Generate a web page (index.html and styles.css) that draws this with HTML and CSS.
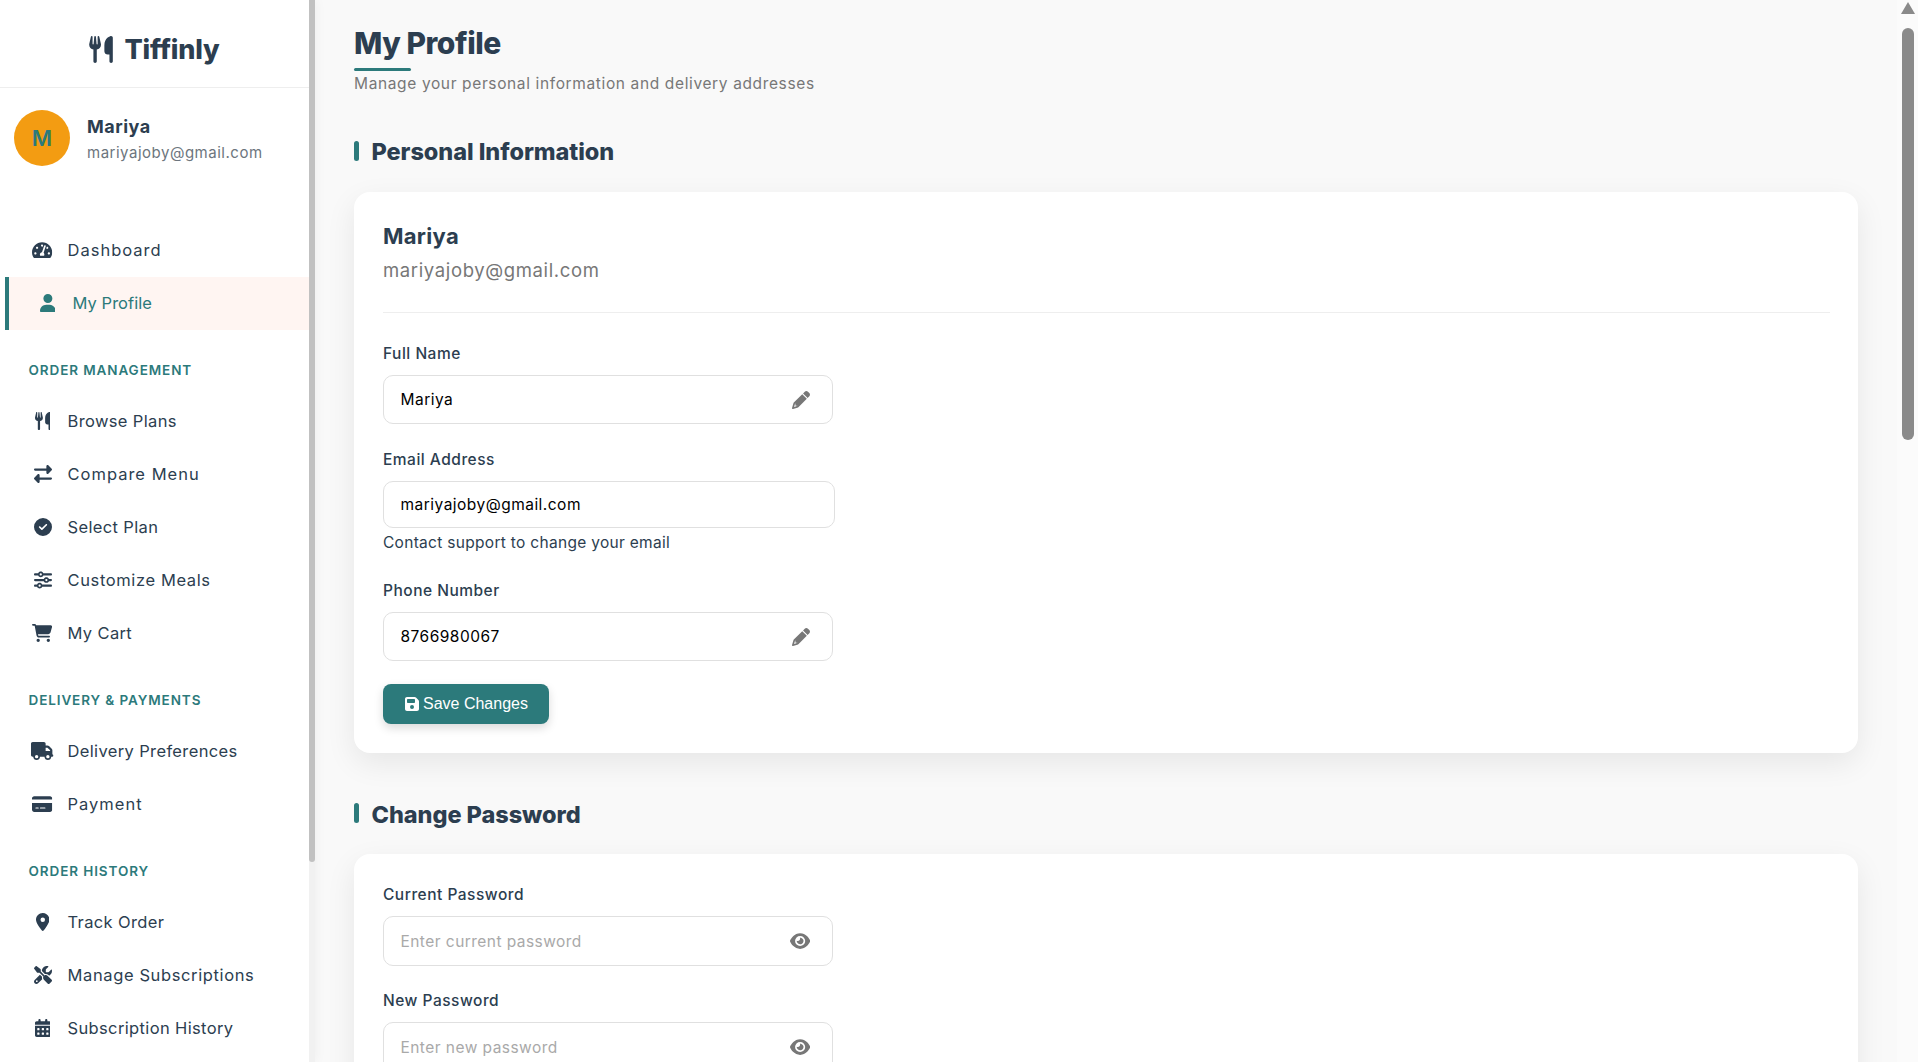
FILE: index.html
```html
<!doctype html>
<html lang="en">
<head>
<meta charset="utf-8">
<title>My Profile - Tiffinly</title>
<link rel="stylesheet" href="styles.css">
</head>
<body>
<svg class="sprite" xmlns="http://www.w3.org/2000/svg">
  <symbol id="i-utensils" viewBox="0 0 448 512"><path d="M416 0C400 0 288 32 288 176V288c0 35.3 28.7 64 64 64h32V480c0 17.7 14.3 32 32 32s32-14.3 32-32V352 240 32c0-17.7-14.3-32-32-32zM64 16C64 7.8 57.9 1 49.7 .1S34.2 4.6 32.4 12.5L2.1 148.8C.7 155.1 0 161.5 0 167.9c0 45.9 35.1 83.6 80 87.7V480c0 17.7 14.3 32 32 32s32-14.3 32-32V255.6c44.9-4.1 80-41.8 80-87.7c0-6.4-.7-12.8-2.1-19.1L191.6 12.5c-1.8-8-9.3-13.3-17.4-12.4S160 7.8 160 16V150.2c0 5.4-4.4 9.8-9.8 9.8c-5.1 0-9.3-3.9-9.8-9L127.9 14.6C127.2 6.3 120.3 0 112 0s-15.2 6.3-15.9 14.6L83.7 151c-.5 5.1-4.7 9-9.8 9c-5.4 0-9.8-4.4-9.8-9.8V16zm48.3 152l-.3 0-.3 0 .3-.7 .3 .7z"/></symbol>
  <symbol id="i-gauge" viewBox="0 0 576 512"><path d="M288 32C128.94 32 0 160.94 0 320c0 52.8 14.25 102.26 39.06 144.8 5.61 9.62 16.3 15.2 27.44 15.2h443c11.14 0 21.83-5.58 27.44-15.2C561.75 422.26 576 372.8 576 320c0-159.06-128.94-288-288-288zm0 64c14.71 0 26.58 10.13 30.32 23.65-1.11 2.26-2.64 4.23-3.45 6.67l-9.22 27.67c-5.13 3.49-10.97 6.01-17.64 6.01-17.67 0-32-14.33-32-32S270.33 96 288 96zM96 384c-17.67 0-32-14.33-32-32s14.33-32 32-32 32 14.33 32 32-14.33 32-32 32zm48-160c-17.67 0-32-14.33-32-32s14.33-32 32-32 32 14.33 32 32-14.33 32-32 32zm246.77-72.41l-61.33 184C343.13 347.33 352 364.54 352 384c0 11.72-3.38 22.55-8.88 32H232.88c-5.5-9.45-8.88-20.28-8.88-32 0-33.94 26.5-61.43 59.9-63.59l61.34-184.01c4.17-12.56 17.73-19.45 30.36-15.17 12.57 4.19 19.35 17.79 15.17 30.36zm14.66 57.2l15.52-46.55c3.47-1.29 7.13-2.23 11.05-2.23 17.67 0 32 14.33 32 32s-14.33 32-32 32c-11.38-.01-20.89-6.28-26.57-15.22zM480 384c-17.67 0-32-14.33-32-32s14.33-32 32-32 32 14.33 32 32-14.33 32-32 32z"/></symbol>
  <symbol id="i-user" viewBox="0 0 448 512"><path d="M224 256A128 128 0 1 0 224 0a128 128 0 1 0 0 256zm-45.7 48C79.8 304 0 383.8 0 482.3C0 498.7 13.3 512 29.7 512H418.3c16.4 0 29.7-13.3 29.7-29.7C448 383.8 368.2 304 269.7 304H178.3z"/></symbol>
  <symbol id="i-exchange" viewBox="0 0 512 512"><path d="M32 96l320 0V32c0-12.9 7.8-24.6 19.8-29.6s25.7-2.2 34.9 6.9l96 96c6 6 9.4 14.1 9.4 22.6s-3.4 16.6-9.4 22.6l-96 96c-9.2 9.2-22.9 11.9-34.9 6.9s-19.8-16.6-19.8-29.6V160L32 160c-17.7 0-32-14.3-32-32s14.3-32 32-32zM480 352c17.7 0 32 14.3 32 32s-14.3 32-32 32H160v64c0 12.9-7.8 24.6-19.8 29.6s-25.7 2.2-34.9-6.9l-96-96c-6-6-9.4-14.1-9.4-22.6s3.4-16.6 9.4-22.6l96-96c9.2-9.2 22.9-11.9 34.9-6.9s19.8 16.6 19.8 29.6l0 64H480z"/></symbol>
  <symbol id="i-check" viewBox="0 0 512 512"><path d="M256 512A256 256 0 1 0 256 0a256 256 0 1 0 0 512zM369 209L241 337c-9.4 9.4-24.6 9.4-33.9 0l-64-64c-9.4-9.4-9.4-24.6 0-33.9s24.6-9.4 33.9 0l47 47L335 175c9.4-9.4 24.6-9.4 33.9 0s9.4 24.6 0 33.9z"/></symbol>
  <symbol id="i-sliders" viewBox="0 0 512 512"><path d="M0 416c0 17.7 14.3 32 32 32l54.7 0c12.3 28.3 40.5 48 73.3 48s61-19.7 73.3-48L480 448c17.7 0 32-14.3 32-32s-14.3-32-32-32l-246.7 0c-12.3-28.3-40.5-48-73.3-48s-61 19.7-73.3 48L32 384c-17.7 0-32 14.3-32 32zm128 0a32 32 0 1 1 64 0 32 32 0 1 1 -64 0zM320 256a32 32 0 1 1 64 0 32 32 0 1 1 -64 0zm32-80c-32.8 0-61 19.7-73.3 48L32 224c-17.7 0-32 14.3-32 32s14.3 32 32 32l246.7 0c12.3 28.3 40.5 48 73.3 48s61-19.7 73.3-48l54.7 0c17.7 0 32-14.3 32-32s-14.3-32-32-32l-54.7 0c-12.3-28.3-40.5-48-73.3-48zM192 128a32 32 0 1 1 0-64 32 32 0 1 1 0 64zm73.3-64C253 35.7 224.8 16 192 16s-61 19.7-73.3 48L32 64C14.3 64 0 78.3 0 96s14.3 32 32 32l86.7 0c12.3 28.3 40.5 48 73.3 48s61-19.7 73.3-48L480 128c17.7 0 32-14.3 32-32s-14.3-32-32-32L265.3 64z"/></symbol>
  <symbol id="i-cart" viewBox="0 0 576 512"><path d="M0 24C0 10.7 10.7 0 24 0H69.5c22 0 41.5 12.8 50.6 32h411c26.3 0 45.5 25 38.6 50.4l-41 152.3c-8.5 31.4-37 53.3-69.5 53.3H170.7l5.4 28.5c2.2 11.3 12.1 19.5 23.6 19.5H488c13.3 0 24 10.7 24 24s-10.7 24-24 24H199.7c-34.6 0-64.3-24.6-70.7-58.5L77.4 54.5c-.7-3.8-4-6.5-7.9-6.5H24C10.7 48 0 37.3 0 24zM128 464a48 48 0 1 1 96 0 48 48 0 1 1 -96 0zm336-48a48 48 0 1 1 0 96 48 48 0 1 1 0-96z"/></symbol>
  <symbol id="i-truck" viewBox="0 0 640 512"><path d="M48 0C21.5 0 0 21.5 0 48V368c0 26.5 21.5 48 48 48H64c0 53 43 96 96 96s96-43 96-96H384c0 53 43 96 96 96s96-43 96-96h32c17.7 0 32-14.3 32-32s-14.3-32-32-32V288 256 237.3c0-17-6.7-33.3-18.7-45.3L512 114.7c-12-12-28.3-18.7-45.3-18.7H416V48c0-26.5-21.5-48-48-48H48zM416 160h50.7L544 237.3V256H416V160zM112 416a48 48 0 1 1 96 0 48 48 0 1 1 -96 0zm368-48a48 48 0 1 1 0 96 48 48 0 1 1 0-96z"/></symbol>
  <symbol id="i-card" viewBox="0 0 576 512"><path d="M64 32C28.7 32 0 60.7 0 96v32H576V96c0-35.3-28.7-64-64-64H64zM576 224H0V416c0 35.3 28.7 64 64 64H512c35.3 0 64-28.7 64-64V224zM112 352h64c8.8 0 16 7.2 16 16s-7.2 16-16 16H112c-8.8 0-16-7.2-16-16s7.2-16 16-16zm112 16c0-8.8 7.2-16 16-16H368c8.8 0 16 7.2 16 16s-7.2 16-16 16H240c-8.8 0-16-7.2-16-16z"/></symbol>
  <symbol id="i-pin" viewBox="0 0 384 512"><path d="M215.7 499.2C267 435 384 279.4 384 192C384 86 298 0 192 0S0 86 0 192c0 87.4 117 243 168.3 307.2c12.3 15.3 35.1 15.3 47.4 0zM192 128a64 64 0 1 1 0 128 64 64 0 1 1 0-128z"/></symbol>
  <symbol id="i-tools" viewBox="0 0 512 512"><path d="M78.6 5C69.1-2.4 55.6-1.5 47 7L7 47c-8.5 8.5-9.4 22-2.1 31.6l80 104c4.5 5.9 11.6 9.4 19 9.4h54.1l109 109c-14.7 29-10 65.4 14.3 89.6l112 112c12.5 12.5 32.8 12.5 45.3 0l64-64c12.5-12.5 12.5-32.8 0-45.3l-112-112c-24.2-24.2-60.6-29-89.6-14.3l-109-109V104c0-7.5-3.5-14.5-9.4-19L78.6 5zM19.9 396.1C7.2 408.8 0 426.1 0 444.1C0 481.6 30.4 512 67.9 512c18 0 35.3-7.2 48-19.9L233.7 374.3c-7.8-20.9-9-43.6-3.6-65.1l-61.7-61.7L19.9 396.1zM512 144c0-10.5-1.1-20.7-3.2-30.5c-2.4-11.2-16.1-14.1-24.2-6l-63.9 63.9c-3 3-7.1 4.7-11.3 4.7H352c-8.8 0-16-7.2-16-16V102.6c0-4.2 1.7-8.3 4.7-11.3l63.9-63.9c8.1-8.1 5.2-21.8-6-24.2C388.7 1.1 378.5 0 368 0C288.5 0 224 64.5 224 144l0 .8 85.3 85.3c36-9.1 75.8 .5 104 28.7L429 274.5c49-23 83-72.8 83-130.5zM56 432a24 24 0 1 1 48 0 24 24 0 1 1 -48 0z"/></symbol>
  <symbol id="i-calendar" viewBox="0 0 448 512"><path d="M128 0c17.7 0 32 14.3 32 32V64H288V32c0-17.7 14.3-32 32-32s32 14.3 32 32V64h48c26.5 0 48 21.5 48 48v48H0V112C0 85.5 21.5 64 48 64H96V32c0-17.7 14.3-32 32-32zM0 192H448V464c0 26.5-21.5 48-48 48H48c-26.5 0-48-21.5-48-48V192zm64 80v32c0 8.8 7.2 16 16 16h32c8.8 0 16-7.2 16-16V272c0-8.8-7.2-16-16-16H80c-8.8 0-16 7.2-16 16zm128 0v32c0 8.8 7.2 16 16 16h32c8.8 0 16-7.2 16-16V272c0-8.8-7.2-16-16-16H208c-8.8 0-16 7.2-16 16zm144-16c-8.8 0-16 7.2-16 16v32c0 8.8 7.2 16 16 16h32c8.8 0 16-7.2 16-16V272c0-8.8-7.2-16-16-16H336zM64 400v32c0 8.8 7.2 16 16 16h32c8.8 0 16-7.2 16-16V400c0-8.8-7.2-16-16-16H80c-8.8 0-16 7.2-16 16zm144-16c-8.8 0-16 7.2-16 16v32c0 8.8 7.2 16 16 16h32c8.8 0 16-7.2 16-16V400c0-8.8-7.2-16-16-16H208zm112 16v32c0 8.8 7.2 16 16 16h32c8.8 0 16-7.2 16-16V400c0-8.8-7.2-16-16-16H336c-8.8 0-16 7.2-16 16z"/></symbol>
  <symbol id="i-pencil" viewBox="0 0 512 512"><path d="M421.7 220.3L188.5 453.4L154.6 419.5L158.1 416H112C103.2 416 96 408.8 96 400V353.9L92.51 357.4C87.78 362.2 84.31 368 82.42 374.4L59.44 452.6L137.6 429.6C143.1 427.7 149.8 424.2 154.6 419.5L188.5 453.4C178.1 463.8 165.2 471.5 151.1 475.6L30.77 511C22.35 513.5 13.24 511.2 7.03 504.1C.8198 498.8-1.502 489.7 .976 481.2L36.37 360.9C40.53 346.8 48.16 333.9 58.57 323.5L291.7 90.34L421.7 220.3zM492.7 58.75C517.7 83.74 517.7 124.3 492.7 149.3L444.3 197.7L314.3 67.72L362.7 19.32C387.7-5.678 428.3-5.678 453.3 19.32L492.7 58.75z"/></symbol>
  <symbol id="i-save" viewBox="0 0 448 512"><path d="M64 32C28.7 32 0 60.7 0 96V416c0 35.3 28.7 64 64 64H384c35.3 0 64-28.7 64-64V173.3c0-17-6.7-33.3-18.7-45.3L352 50.7C340 38.7 323.7 32 306.7 32H64zm0 96c0-17.7 14.3-32 32-32H288c17.7 0 32 14.3 32 32v64c0 17.7-14.3 32-32 32H96c-17.7 0-32-14.3-32-32V128zM224 288a64 64 0 1 1 0 128 64 64 0 1 1 0-128z"/></symbol>
  <symbol id="i-eye" viewBox="0 0 576 512"><path d="M288 32c-80.8 0-145.5 36.8-192.6 80.6C48.6 156 17.3 208 2.5 243.7c-3.3 7.9-3.3 16.7 0 24.6C17.3 304 48.6 356 95.4 399.4C142.5 443.2 207.2 480 288 480s145.5-36.8 192.6-80.6c46.8-43.5 78.1-95.4 92.9-131.1c3.3-7.9 3.3-16.7 0-24.6c-14.8-35.7-46.1-87.7-92.9-131.1C433.5 68.8 368.8 32 288 32zM144 256a144 144 0 1 1 288 0 144 144 0 1 1 -288 0zm144-64c0 35.3-28.7 64-64 64c-7.1 0-13.9-1.2-20.3-3.3c-5.5-1.8-11.9 1.6-11.7 7.4c.3 6.9 1.3 13.8 3.2 20.7c13.7 51.2 66.4 81.6 117.6 67.9s81.6-66.4 67.9-117.6c-11.1-41.5-47.8-69.4-88.6-71.1c-5.8-.2-9.2 6.1-7.4 11.7c2.1 6.4 3.3 13.2 3.3 20.3z"/></symbol>
</svg>

<div class="app">
  <aside class="sidebar">
    <div class="side-inner">
      <div class="logo">
        <svg class="logo-icon"><use href="#i-utensils"/></svg>
        <span class="logo-text">Tiffinly</span>
      </div>
      <div class="user">
        <div class="avatar">M</div>
        <div class="user-info">
          <div class="user-name">Mariya</div>
          <div class="user-email">mariyajoby@gmail.com</div>
        </div>
      </div>
      <nav class="nav">
        <a class="nav-item top ls-lg"><span class="nav-icon"><svg class="w576"><use href="#i-gauge"/></svg></span>Dashboard</a>
        <a class="nav-item top active ls-xs"><span class="nav-icon"><svg class="w448"><use href="#i-user"/></svg></span>My Profile</a>
        <div class="nav-title">ORDER MANAGEMENT</div>
        <a class="nav-item"><span class="nav-icon"><svg class="w448"><use href="#i-utensils"/></svg></span>Browse Plans</a>
        <a class="nav-item ls-lg"><span class="nav-icon"><svg class="w512"><use href="#i-exchange"/></svg></span>Compare Menu</a>
        <a class="nav-item"><span class="nav-icon"><svg class="w512"><use href="#i-check"/></svg></span>Select Plan</a>
        <a class="nav-item ls-md"><span class="nav-icon"><svg class="w512"><use href="#i-sliders"/></svg></span>Customize Meals</a>
        <a class="nav-item"><span class="nav-icon"><svg class="w576"><use href="#i-cart"/></svg></span>My Cart</a>
        <div class="nav-title">DELIVERY &amp; PAYMENTS</div>
        <a class="nav-item"><span class="nav-icon"><svg class="w640"><use href="#i-truck"/></svg></span>Delivery Preferences</a>
        <a class="nav-item ls-lg"><span class="nav-icon"><svg class="w576"><use href="#i-card"/></svg></span>Payment</a>
        <div class="nav-title nav-title-last">ORDER HISTORY</div>
        <a class="nav-item"><span class="nav-icon"><svg class="w384"><use href="#i-pin"/></svg></span>Track Order</a>
        <a class="nav-item ls-md"><span class="nav-icon"><svg class="w512"><use href="#i-tools"/></svg></span>Manage Subscriptions</a>
        <a class="nav-item"><span class="nav-icon"><svg class="w448"><use href="#i-calendar"/></svg></span>Subscription History</a>
      </nav>
    </div>
    <div class="side-scroll"><div class="side-thumb"></div></div>
  </aside>

  <main class="main">
    <header class="page-head">
      <h1 class="page-title">My Profile</h1>
      <p class="page-sub">Manage your personal information and delivery addresses</p>
    </header>

    <section class="section">
      <h2 class="section-title">Personal Information</h2>
      <div class="card">
        <div class="card-head">
          <div class="card-name">Mariya</div>
          <div class="card-email">mariyajoby@gmail.com</div>
        </div>
        <div class="group">
          <label class="label">Full Name</label>
          <div class="field">
            <input class="input" value="Mariya">
            <svg class="field-icon pencil"><use href="#i-pencil"/></svg>
          </div>
        </div>
        <div class="group group-email">
          <label class="label">Email Address</label>
          <div class="field field-wide">
            <input class="input input-short" value="mariyajoby@gmail.com">
          </div>
          <div class="note">Contact support to change your email</div>
        </div>
        <div class="group">
          <label class="label">Phone Number</label>
          <div class="field">
            <input class="input" value="8766980067">
            <svg class="field-icon pencil"><use href="#i-pencil"/></svg>
          </div>
        </div>
        <button class="btn"><svg class="btn-icon"><use href="#i-save"/></svg>Save Changes</button>
      </div>
    </section>

    <section class="section">
      <h2 class="section-title section-title-low">Change Password</h2>
      <div class="card card-pass">
        <div class="group group-pass">
          <label class="label">Current Password</label>
          <div class="field">
            <input class="input input-tall" placeholder="Enter current password">
            <svg class="field-icon eye"><use href="#i-eye"/></svg>
          </div>
        </div>
        <div class="group group-pass">
          <label class="label">New Password</label>
          <div class="field">
            <input class="input input-tall" placeholder="Enter new password">
            <svg class="field-icon eye"><use href="#i-eye"/></svg>
          </div>
        </div>
      </div>
    </section>

    <div class="page-scroll"><div class="page-arrow"></div><div class="page-thumb"></div></div>
  </main>
</div>
</body>
</html>
```

FILE: styles.css
```css
* { box-sizing: border-box; }
html, body { margin: 0; height: 100%; overflow: hidden; }
body { font-family: Inter, "Liberation Sans", sans-serif; color: #2c3e50; background: #f9f9f9; }
.sprite { display: none; }
svg { fill: currentColor; display: block; }

.app { display: flex; height: 100vh; overflow: hidden; }

/* Sidebar */
.sidebar { position: relative; z-index: 2; flex: 0 0 315px; width: 315px; background: #fff; box-shadow: 2px 0 10px rgba(0,0,0,.04); display: flex; overflow: hidden; }
.side-inner { flex: 0 0 309px; width: 309px; overflow: hidden; }
.side-scroll { flex: 0 0 6px; background: #f1f1f1; }
.side-thumb { height: 862px; background: #c1c1c1; border-radius: 0 0 4px 4px; }

.logo { height: 88px; border-bottom: 1px solid #eee; display: flex; align-items: center; justify-content: center; gap: 11px; padding-top: 12px; }
.logo-icon { width: 24px; height: 27px; }
.logo-text { font-size: 27px; font-weight: 800; line-height: 34px; letter-spacing: -.2px; }

.user { display: flex; gap: 17px; padding: 22px 14px; }
.avatar { flex: 0 0 56px; width: 56px; height: 56px; border-radius: 50%; background: #f39c12; color: #2c7a7b; display: flex; align-items: center; justify-content: center; font-size: 22px; font-weight: 600; }
.user-info { display: flex; flex-direction: column; }
.user-name { font-size: 18px; font-weight: 700; line-height: 24px; margin-top: 5px; letter-spacing: .5px; }
.user-email { font-size: 15px; line-height: 22px; margin-top: 3px; color: #6c757d; letter-spacing: .51px; white-space: nowrap; }

.nav { padding-top: 36px; }
.nav-item { display: flex; align-items: center; height: 53px; padding-left: 26px; border-left: 4px solid transparent; font-size: 16.5px; letter-spacing: .36px; color: #2c3e50; white-space: nowrap; }
.nav-item.top { padding-bottom: 1px; }
.nav-item.ls-md { letter-spacing: .62px; }
.nav-item.ls-lg { letter-spacing: 1px; }
.nav-item.ls-xs { letter-spacing: .05px; }
.nav-item.active { transform: translateX(5px); border-left-color: #2c7a7b; background: #fff5f2; color: #2c7a7b; }
.nav-icon { flex: 0 0 25px; width: 25px; margin-right: 12.5px; display: flex; justify-content: center; }
.nav-icon svg { height: 18px; }
.w384 { width: 13.5px; }
.w448 { width: 15.75px; }
.w512 { width: 18px; }
.w576 { width: 20.25px; }
.w640 { width: 22.5px; }
.nav-title { margin: 30px 0 14.5px 28.5px; font-size: 13.5px; line-height: 20px; font-weight: 600; letter-spacing: .9px; color: #2c7a7b; white-space: nowrap; }
.nav-title-last { margin-top: 31px; }

/* Main */
.main { position: relative; flex: 1; min-width: 0; padding: 18px 60px 0 39px; overflow: hidden; }
.page-head { margin-bottom: 41px; }
.page-title { margin: 0; font-size: 30px; line-height: 50px; font-weight: 800; letter-spacing: -.45px; color: #2c3e50; }
.page-title::after { content: ""; display: block; width: 57px; height: 3px; border-radius: 2px; background: #2c7a7b; }
.page-sub { margin: 1px 0 0; font-size: 15.5px; line-height: 24px; letter-spacing: .63px; color: #777; }

.section { margin-bottom: 46px; }
.section-title { position: relative; margin: 0 0 25px; padding-left: 17.5px; font-size: 23.5px; line-height: 30px; font-weight: 800; letter-spacing: -.05px; color: #2c3e50; }
.section-title-low { padding-top: 1px; margin-bottom: 24px; }
.section-title::before { content: ""; position: absolute; left: 0; top: 4px; width: 5px; height: 20px; border-radius: 3px; background: #2c7a7b; }

.card { padding: 29px 28px 29px 29px; background: #fff; border-radius: 16px; box-shadow: 0 10px 30px rgba(0,0,0,.08); }
.card-pass { padding-top: 28px; }
.card-head { padding-bottom: 28px; margin-bottom: 28px; border-bottom: 1px solid #eee; }
.card-name { font-size: 22px; line-height: 30px; font-weight: 700; letter-spacing: .3px; }
.card-email { margin-top: 5px; font-size: 18.5px; line-height: 28px; letter-spacing: .63px; color: #777; }

.group { margin-bottom: 23px; }
.group-email { margin-bottom: 24px; }
.group-pass { margin-bottom: 22px; }
.label { display: block; padding-top: 1px; margin-bottom: 9px; font-size: 15.5px; line-height: 24px; font-weight: 500; letter-spacing: .5px; color: #2c3e50; }
.field { position: relative; width: 450px; }
.field-wide { width: 452px; }
.input { display: block; width: 100%; height: 49px; padding: 0 16.5px; border: 1px solid #e0e0e0; border-radius: 10px; background: #fff; font: 400 15.5px Inter, sans-serif; letter-spacing: .48px; color: #000; outline: none; }
.input-short { height: 47px; }
.input-tall { height: 50px; }
.input::placeholder { color: #a9a9a9; opacity: 1; letter-spacing: .45px; }
.field-icon { position: absolute; right: 23px; top: 50%; transform: translateY(-50%); height: 18px; color: #777; }
.pencil { width: 18px; }
.eye { width: 20.25px; }
.note { margin-top: 4px; font-size: 15.5px; line-height: 22px; letter-spacing: .3px; color: #2c3e50; }

.btn { display: flex; align-items: center; gap: 4px; width: 166px; height: 40px; padding: 0 0 0 22px; border: 0; border-radius: 8px; background: #2c7a7b; box-shadow: 0 4px 10px rgba(0,0,0,.15); color: #fff; font: 400 16px "Liberation Sans", Arial, sans-serif; }
.btn-icon { width: 14px; height: 16px; }

/* Page scrollbar */
.page-scroll { position: absolute; top: 0; right: 0; bottom: 0; width: 21px; background: #fbfbfb; }
.page-arrow { position: absolute; top: 2px; left: 4px; width: 0; height: 0; border-left: 7px solid transparent; border-right: 7px solid transparent; border-bottom: 12px solid #8a8a8a; }
.page-thumb { position: absolute; top: 28px; left: 5px; width: 12px; height: 412px; border-radius: 6px; background: #8a8a8a; }
```
